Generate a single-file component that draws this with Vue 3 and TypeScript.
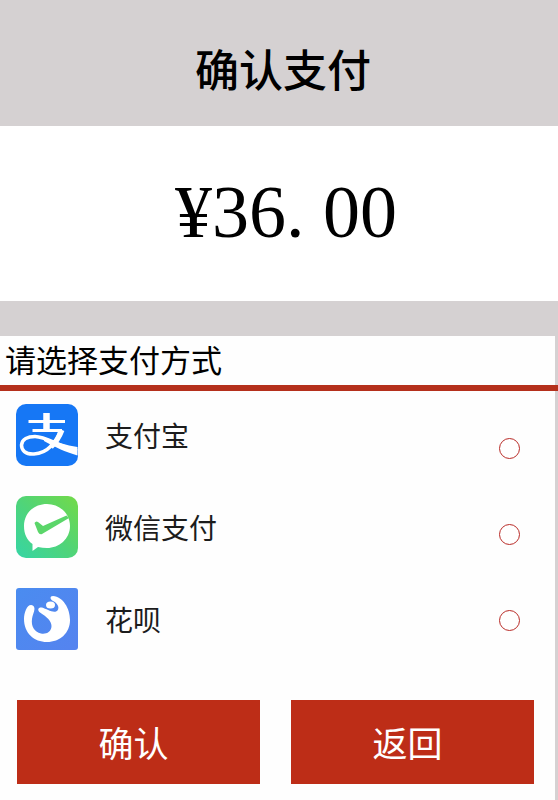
<script setup lang="ts">
import { ref } from 'vue'

type Method = 'alipay' | 'wechat' | 'huabei'

const methods: { id: Method; name: string }[] = [
  { id: 'alipay', name: '支付宝' },
  { id: 'wechat', name: '微信支付' },
  { id: 'huabei', name: '花呗' },
]
const selected = ref<Method | null>(null)
</script>

<template>
  <main class="page">
    <header class="top">
      <h1>确认支付</h1>
    </header>
    <p class="amount">¥36<span class="point">.</span>00</p>
    <form class="panel" @submit.prevent>
      <h2>请选择支付方式</h2>
      <div class="methods">
        <div class="names">
          <label v-for="m in methods" :key="m.id" :for="m.id" class="method">
            <svg v-if="m.id === 'alipay'" class="icon" viewBox="0 0 62 62" aria-hidden="true">
              <rect width="62" height="62" rx="10" fill="#1677f5" />
              <g fill="none" stroke="#fff">
                <path d="M12.500 17.500H49M16.500 26.500H46" stroke-width="3" />
                <path d="M30.500 9V27" stroke-width="6.500" />
                <path d="M44 27C41 37 32 49.500 18 50C9 50.500 5.500 46 5.500 41C6 35 12 32.500 19 32.500C30 32.500 42 42 61 47" stroke-width="3.500" />
                <path d="M46 26C43 34 40 38 35 43" stroke-width="5" />
              </g>
              <path d="M28 33C40 38 50 41.500 61.500 43V51.500C49 48 39 43 28 37Z" fill="#fff" />
            </svg>
            <svg v-else-if="m.id === 'wechat'" class="icon" viewBox="0 0 62 62" aria-hidden="true">
              <defs>
                <linearGradient id="green" x1="1" y1="0" x2="0" y2="1">
                  <stop offset="0" stop-color="#73da48" />
                  <stop offset=".5" stop-color="#50d478" />
                  <stop offset="1" stop-color="#36d5a5" />
                </linearGradient>
              </defs>
              <rect width="62" height="62" rx="10" fill="url(#green)" />
              <path d="M31 8C43 8 54 17 54 30C54 43 43 52 31 52C28 52 25 51.500 22 51L16.500 55L16.500 48C11 44 8 38 8 30C8 17 18 8 31 8Z" fill="#fff" />
              <path d="M18.500 27Q20 24.500 22 26L27 30L50.500 19.500L53 22L26 38Q23.500 39 22 36Z" fill="#5bd66a" />
            </svg>
            <svg v-else class="icon" viewBox="0 0 62 62" aria-hidden="true">
              <defs>
                <linearGradient id="blue" x1="0" y1="0" x2="1" y2="1">
                  <stop offset="0" stop-color="#4a8cf0" />
                  <stop offset="1" stop-color="#5583ef" />
                </linearGradient>
              </defs>
              <rect width="62" height="62" rx="3" fill="url(#blue)" />
              <path d="M17.500 18C12 14 8 24 8 31C8 45 18 54 31 54C44 54 54 45 54 32C54 20 47 9 37 8C33.500 8 34 11.500 37 13C41 15 44 19 41.500 22.500C38 26 31 21 26 19.500C22 19 21 22 24 24.500C31 29 35.500 33 35.500 38C35.500 44 30 46.500 25 45.500C18 44 15 38 16 31C17 25 20 21 17.500 18Z" fill="#fff" />
              <ellipse cx="34.500" cy="17" rx="4.500" ry="3.500" fill="#fff" />
            </svg>
            <span class="name">{{ m.name }}</span>
          </label>
        </div>
        <div class="choices">
          <input v-for="m in methods" :id="m.id" :key="m.id" v-model="selected" type="radio" name="method" :value="m.id" />
        </div>
      </div>
      <div class="actions">
        <button type="submit">确认</button>
        <button type="button">返回</button>
      </div>
    </form>
  </main>
</template>

<style>
body {
  background: #d5d1d2;
}
</style>

<style scoped>
.page {
  font-family: "Liberation Sans", "Noto Sans CJK SC", sans-serif;
  color: #000;
}
.top {
  display: flex;
  align-items: center;
  justify-content: center;
  padding: 40px 0 22px;
}
h1 {
  margin: 0 0 0 8px;
  font-size: 44px;
  line-height: 64px;
  font-weight: 500;
}
.amount {
  margin: 0;
  padding: 38px 0 41px 14px;
  background: #fff;
  font-family: "Liberation Serif", serif;
  font-size: 74px;
  line-height: 96px;
  text-align: center;
}
.point {
  display: inline-block;
  width: 37px;
  text-align: left;
}
.panel {
  margin-top: 35px;
  border-right: 3px solid #d5d1d2;
  background: #fefefe;
}
h2 {
  margin: 0 -3px 0 0;
  padding: 2px 5px 0;
  border-bottom: 6px solid #b5301c;
  background: linear-gradient(#d5d1d2, #d5d1d2) right / 3px 100% no-repeat #fefefe;
  font-size: 31px;
  line-height: 47px;
  font-weight: 400;
}
.methods {
  display: flex;
  justify-content: space-between;
  padding: 13px 35px 50px 16px;
}
.names {
  display: flex;
  flex-direction: column;
  gap: 30px;
}
.method {
  display: flex;
  align-items: center;
  gap: 27px;
  font-size: 28px;
  line-height: 40px;
  color: #1c1c1c;
}
.name {
  padding-top: 6px;
}
.icon {
  width: 62px;
  height: 62px;
}
.choices {
  display: flex;
  flex-direction: column;
  gap: 65px;
  padding-top: 34px;
}
input {
  appearance: none;
  width: 21px;
  height: 21px;
  margin: 0;
  border: 1px solid #b92b27;
  border-radius: 50%;
  background: #fff;
}
input:checked {
  background: radial-gradient(#b92b27 45%, #fff 50%);
}
.actions {
  display: flex;
  gap: 31px;
  padding: 0 21px 16px 17px;
}
button {
  flex: 1;
  height: 84px;
  padding: 0 10px 2px 0;
  border: 0;
  background: #bd2d17;
  color: #fff;
  font-family: inherit;
  font-size: 35px;
}
</style>
